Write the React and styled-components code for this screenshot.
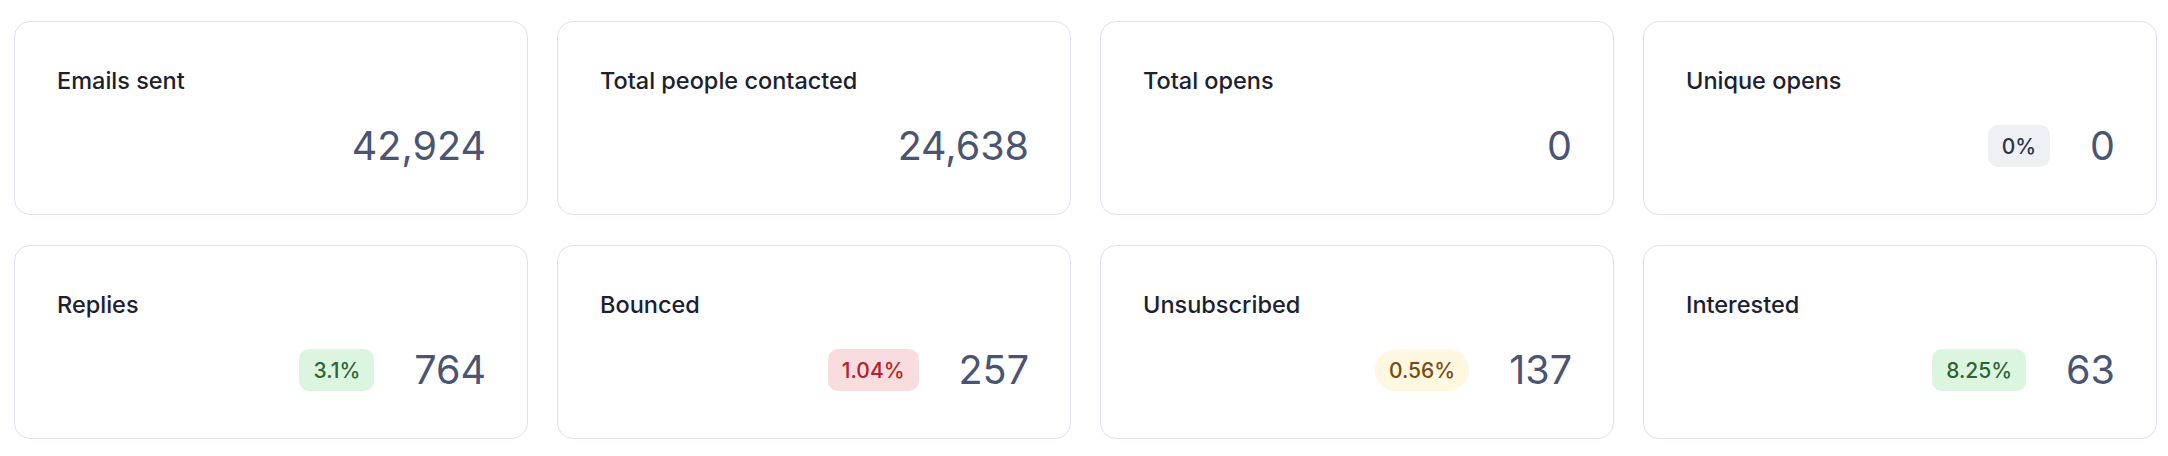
import React from "react";
import styled, { createGlobalStyle, css } from "styled-components";

const Global = createGlobalStyle`
  html, body { margin: 0; padding: 0; background: #ffffff; }
  body { font-family: Inter, "Noto Sans", "Liberation Sans", sans-serif; -webkit-font-smoothing: antialiased; }
`;

const Grid = styled.div`
  display: grid;
  grid-template-columns: repeat(4, 514px);
  column-gap: 29px;
  row-gap: 30px;
  padding: 21px 11px 17px 14px;
`;

const Card = styled.div`
  box-sizing: border-box;
  height: 194px;
  border: 1px solid #dfe1ee;
  border-radius: 16px;
  background: #ffffff;
  display: flex;
  flex-direction: column;
  padding: 45px 41px 0 42px;
`;

const Title = styled.div`
  font-size: 23.5px;
  line-height: 28px;
  font-weight: 500;
  color: #1b2130;
`;

const ValueRow = styled.div`
  margin-top: 28px;
  display: flex;
  justify-content: flex-end;
  align-items: center;
  gap: 40px;
`;

const Value = styled.div`
  font-size: 39.5px;
  line-height: 46px;
  font-weight: 400;
  color: #4a5574;
`;

const tones = {
  green: css`background: #dcf5de; color: #2c6434;`,
  red: css`background: #f9dcdd; color: #b1232b;`,
  yellow: css`background: #fdf8df; color: #7b4a12;`,
  gray: css`background: #eef0f4; color: #2b3345;`,
};

const Badge = styled.span`
  display: inline-flex;
  align-items: center;
  height: 42px;
  box-sizing: border-box;
  padding: 0 14px;
  font-size: 21px;
  font-weight: 500;
  border-radius: ${(p) => (p.$pill ? "21px" : "10px")};
  ${(p) => tones[p.$tone]}
`;

const stats = [
  { title: "Emails sent", value: "42,924" },
  { title: "Total people contacted", value: "24,638" },
  { title: "Total opens", value: "0" },
  { title: "Unique opens", value: "0", badge: "0%", tone: "gray" },
  { title: "Replies", value: "764", badge: "3.1%", tone: "green" },
  { title: "Bounced", value: "257", badge: "1.04%", tone: "red" },
  { title: "Unsubscribed", value: "137", badge: "0.56%", tone: "yellow", pill: true },
  { title: "Interested", value: "63", badge: "8.25%", tone: "green" },
];

export default function App() {
  return (
    <>
      <Global />
      <Grid>
        {stats.map((s) => (
          <Card key={s.title}>
            <Title>{s.title}</Title>
            <ValueRow>
              {s.badge && (
                <Badge $tone={s.tone} $pill={s.pill}>
                  {s.badge}
                </Badge>
              )}
              <Value>{s.value}</Value>
            </ValueRow>
          </Card>
        ))}
      </Grid>
    </>
  );
}
